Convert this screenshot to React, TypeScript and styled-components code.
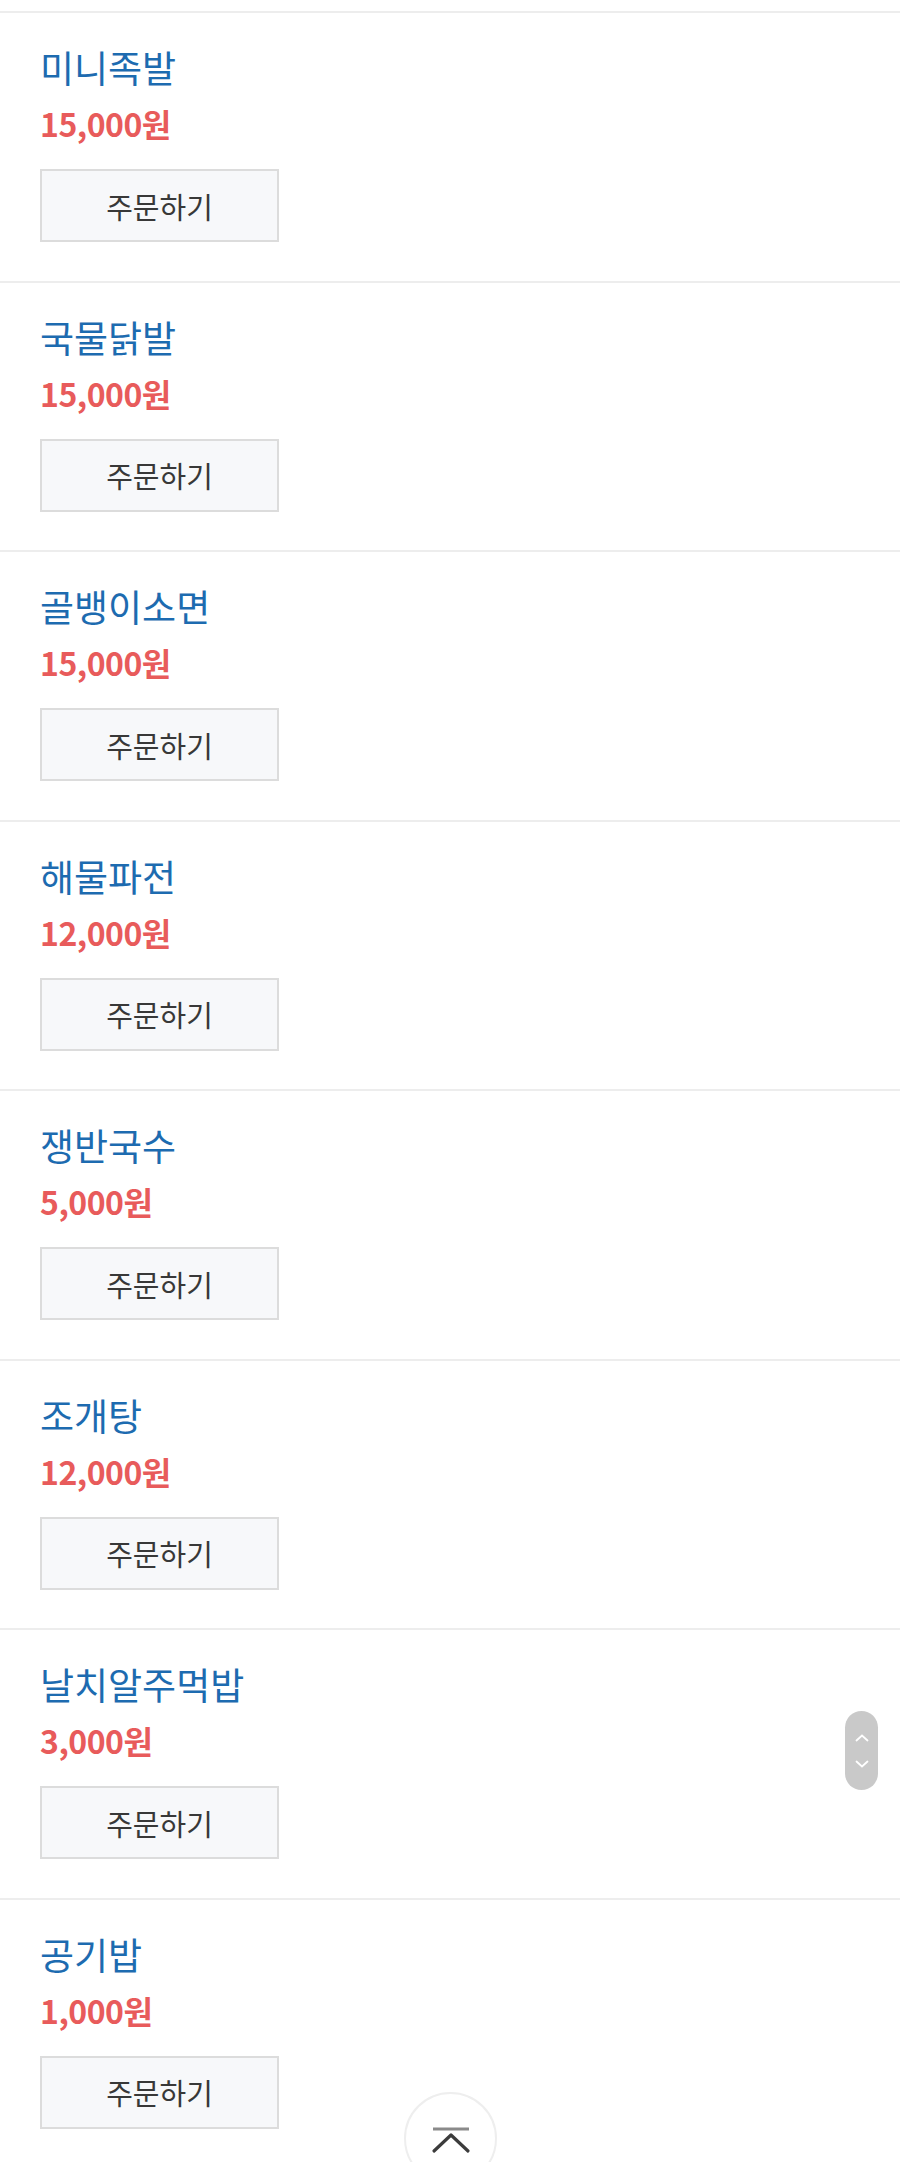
import React from "react";
import styled, { createGlobalStyle } from "styled-components";

const menus = [
  { name: "미니족발", price: 15000 },
  { name: "국물닭발", price: 15000 },
  { name: "골뱅이소면", price: 15000 },
  { name: "해물파전", price: 12000 },
  { name: "쟁반국수", price: 5000 },
  { name: "조개탕", price: 12000 },
  { name: "날치알주먹밥", price: 3000 },
  { name: "공기밥", price: 1000 },
];

const App: React.FC = () => {
  return (
    <>
      <GlobalStyle />
      <Page>
        <MenuList>
          {menus.map((menu) => (
            <MenuItem key={menu.name}>
              <MenuName>{menu.name}</MenuName>
              <MenuPrice>{menu.price.toLocaleString("ko-KR")}원</MenuPrice>
              <OrderButton type="button">주문하기</OrderButton>
            </MenuItem>
          ))}
        </MenuList>

        {/* 우측 스크롤 인디케이터 */}
        <ScrollPill>
          <svg width="16" height="10" viewBox="0 0 16 10">
            <path d="M2.5 7.5 L8 2.5 L13.5 7.5" fill="none" stroke="#fff" strokeWidth="1.8" strokeLinecap="round" />
          </svg>
          <svg width="16" height="10" viewBox="0 0 16 10">
            <path d="M2.5 2.5 L8 7.5 L13.5 2.5" fill="none" stroke="#fff" strokeWidth="1.8" strokeLinecap="round" />
          </svg>
        </ScrollPill>

        {/* 맨 위로 버튼 */}
        <TopButton type="button" aria-label="맨 위로">
          <svg width="40" height="30" viewBox="0 0 40 30">
            <line x1="2" y1="3" x2="38" y2="3" stroke="#8a8a8a" strokeWidth="3" />
            <path d="M3 25 L20 9 L37 25" fill="none" stroke="#3c3c3c" strokeWidth="3.2" strokeLinecap="round" strokeLinejoin="round" />
          </svg>
        </TopButton>
      </Page>
    </>
  );
};

export default App;

const GlobalStyle = createGlobalStyle`
  html, body {
    margin: 0;
    padding: 0;
    background: #ffffff;
  }
  body {
    font-family: "Noto Sans CJK KR", "Noto Sans", sans-serif;
    overflow: hidden;
  }
`;

const Page = styled.div`
  position: relative;
  width: 900px;
  height: 2162px;
  overflow: hidden;
  background: #ffffff;
`;

const MenuList = styled.ul`
  list-style: none;
  margin: 0;
  padding: 11px 0 0;
`;

const MenuItem = styled.li`
  display: flex;
  flex-direction: column;
  align-items: flex-start;
  padding: 30px 40px 38px;
  border-top: 2px solid #ededed;
  box-sizing: border-box;
  height: 269.5px;
`;

const MenuName = styled.h3`
  margin: 0;
  font-size: 37px;
  line-height: 48px;
  font-weight: 400;
  color: #1d6bb0;
`;

const MenuPrice = styled.p`
  margin: 12px 0 0;
  font-size: 32px;
  line-height: 40px;
  font-weight: 700;
  color: #e85b5b;
  letter-spacing: -0.5px;
`;

const OrderButton = styled.button`
  margin-top: 26px;
  width: 239px;
  height: 73px;
  border: 2px solid #dcdcdc;
  background: #f7f8fa;
  font-family: "Noto Sans CJK KR", "Noto Sans", sans-serif;
  font-size: 29px;
  color: #383838;
  padding: 0;
  cursor: pointer;
`;

const ScrollPill = styled.div`
  position: absolute;
  left: 845px;
  top: 1711px;
  width: 33px;
  height: 79px;
  border-radius: 17px;
  background: #c9c9c9;
  display: flex;
  flex-direction: column;
  align-items: center;
  justify-content: center;
  gap: 16px;
`;

const TopButton = styled.button`
  position: absolute;
  left: 404px;
  top: 2092px;
  width: 93px;
  height: 93px;
  border-radius: 50%;
  border: 2px solid #eeeeee;
  background: #ffffff;
  display: flex;
  align-items: flex-start;
  justify-content: center;
  padding: 32px 0 0;
  box-sizing: border-box;
  cursor: pointer;
`;
